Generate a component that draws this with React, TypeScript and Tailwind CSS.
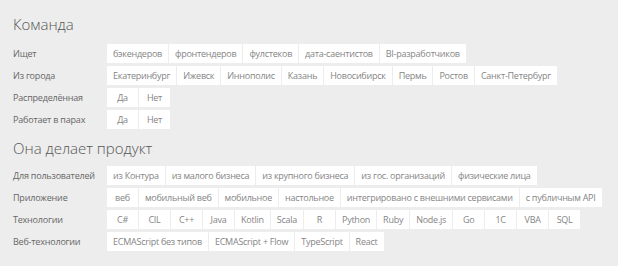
const team = [
  { label: 'Ищет', items: ['бэкендеров', 'фронтендеров', 'фулстеков', 'дата-саентистов', 'BI-разработчиков'] },
  {
    label: 'Из города',
    items: ['Екатеринбург', 'Ижевск', 'Иннополис', 'Казань', 'Новосибирск', 'Пермь', 'Ростов', 'Санкт-Петербург'],
  },
  { label: 'Распределённая', items: ['Да', 'Нет'] },
  { label: 'Работает в парах', items: ['Да', 'Нет'] },
];

const product = [
  {
    label: 'Для пользователей',
    items: ['из Контура', 'из малого бизнеса', 'из крупного бизнеса', 'из гос. организаций', 'физические лица'],
  },
  {
    label: 'Приложение',
    items: ['веб', 'мобильный веб', 'мобильное', 'настольное', 'интегрировано с внешними сервисами', 'с публичным API'],
  },
  {
    label: 'Технологии',
    items: ['C#', 'CIL', 'C++', 'Java', 'Kotlin', 'Scala', 'R', 'Python', 'Ruby', 'Node.js', 'Go', '1C', 'VBA', 'SQL'],
  },
  { label: 'Веб-технологии', items: ['ECMAScript без типов', 'ECMAScript + Flow', 'TypeScript', 'React'] },
];

type Row = { label: string; items: string[] };

function FilterRow({ row }: { row: Row }) {
  return (
    <div className="flex items-center">
      <div className="w-[94px] shrink-0 text-[9px] tracking-[-0.2px] text-[#666]">{row.label}</div>
      <div className="flex flex-wrap gap-px">
        {row.items.map((item) => (
          <button
            key={item}
            className="h-[19px] min-w-[31px] bg-white px-[6px] text-center text-[9px] leading-[19px] tracking-[-0.25px] text-[#858585]"
          >
            {item}
          </button>
        ))}
      </div>
    </div>
  );
}

function Section({ title, rows, first }: { title: string; rows: Row[]; first?: boolean }) {
  return (
    <section className={first ? '' : 'mt-[7px]'}>
      <h2 className="text-[15px] font-light leading-[24px] text-[#555]">{title}</h2>
      <div className={`${first ? 'mt-[8px]' : 'mt-[6px]'} flex flex-col gap-[3px]`}>
        {rows.map((row) => (
          <FilterRow key={row.label} row={row} />
        ))}
      </div>
    </section>
  );
}

export default function App() {
  return (
    <div
      className="min-h-[266px] w-[618px] bg-[#ededed] pl-[13px] pt-[12px]"
      style={{ fontFamily: '"Open Sans", "Noto Sans", sans-serif' }}
    >
      <Section title="Команда" rows={team} first />
      <Section title="Она делает продукт" rows={product} />
    </div>
  );
}
